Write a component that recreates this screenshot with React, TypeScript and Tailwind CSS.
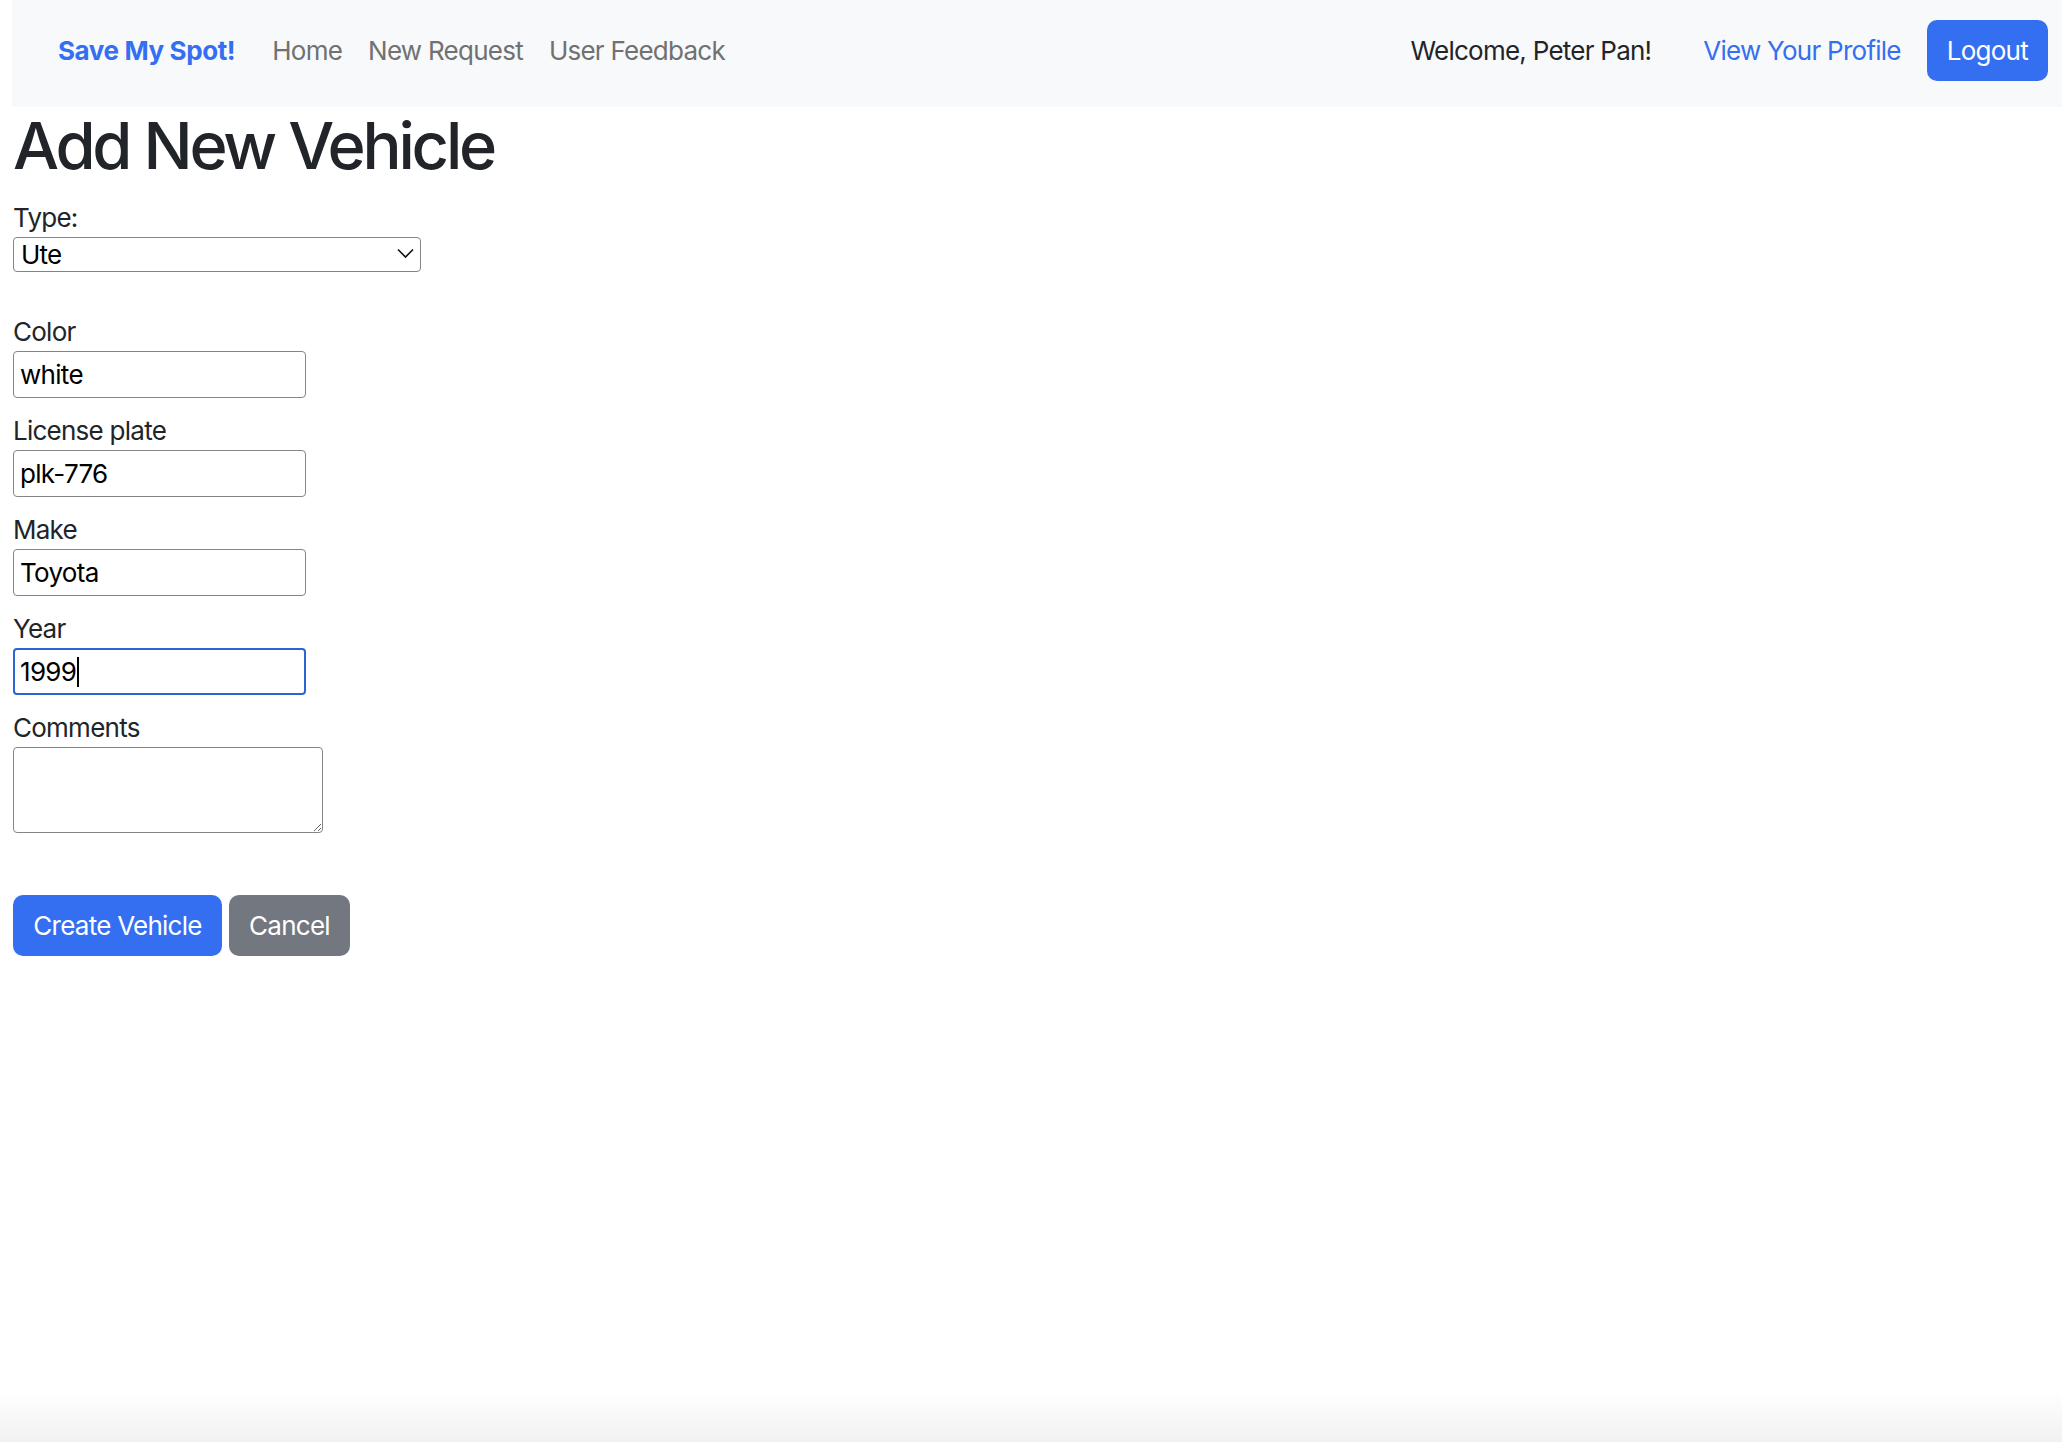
import React, { useState } from 'react';

const field = 'block w-[293px] h-[47px] px-[6px] border border-[#858585] rounded-[4px] bg-white text-[26px] tracking-[-0.7px] text-black outline-none';

function Label({ children }: { children: React.ReactNode }) {
  return <label className="block text-[26px] leading-[39px] text-[#212529]">{children}</label>;
}

export default function App() {
  const [type, setType] = useState('Ute');
  const [form, setForm] = useState({ color: 'white', plate: 'plk-776', make: 'Toyota', comments: '' });

  return (
    <div className="min-h-screen flex flex-col bg-white font-['Inter','Liberation_Sans',sans-serif] tracking-[-0.75px] text-[#212529]">
      <div className="pl-[12px]">
        {/* Navbar */}
        <nav className="h-[107px] pb-[7px] bg-[#f8f9fa] flex items-center pl-[46px] pr-[14px]">
          <a href="#" className="text-[26px] font-bold tracking-[-0.4px] text-[#346ff1] mr-[24px]">Save My Spot!</a>
          <a href="#" className="text-[26px] px-[13px] text-[#707172]">Home</a>
          <a href="#" className="text-[26px] px-[13px] text-[#707172]">New Request</a>
          <a href="#" className="text-[26px] px-[13px] text-[#707172]">User Feedback</a>
          <div className="ml-auto flex items-center">
            <span className="text-[26px] text-[#212529] mr-[52px]">Welcome, Peter Pan!</span>
            <a href="#" className="text-[26px] text-[#346ff1] mr-[26px]">View Your Profile</a>
            <button className="h-[61px] px-[20px] rounded-[10px] bg-[#346ff1] text-white text-[26px]">Logout</button>
          </div>
        </nav>
      </div>

      <div className="pl-[13px]">
        <h1 className="text-[65px] leading-[78px] font-medium mb-[13px] tracking-[-3.2px]">Add New Vehicle</h1>

        <Label>Type:</Label>
        <div className="relative w-[408px] h-[35px]">
          <select
            value={type}
            onChange={(e) => setType(e.target.value)}
            className="appearance-none w-full h-full pl-[7px] border border-[#858585] rounded-[4px] bg-white text-[26px] leading-[33px] text-black outline-none"
          >
            <option>Ute</option>
            <option>Sedan</option>
            <option>Hatchback</option>
            <option>SUV</option>
          </select>
          <svg className="absolute right-[7px] top-[11px] pointer-events-none" width="17" height="11" viewBox="0 0 17 11" fill="none">
            <path d="M1 1.5 L8.5 9 L16 1.5" stroke="#111" strokeWidth="1.6" />
          </svg>
        </div>

        <div className="h-[40px]" />

        <Label>Color</Label>
        <input className={field} value={form.color} onChange={(e) => setForm({ ...form, color: e.target.value })} />
        <div className="h-[13px]" />

        <Label>License plate</Label>
        <input className={field} value={form.plate} onChange={(e) => setForm({ ...form, plate: e.target.value })} />
        <div className="h-[13px]" />

        <Label>Make</Label>
        <input className={field} value={form.make} onChange={(e) => setForm({ ...form, make: e.target.value })} />
        <div className="h-[13px]" />

        <Label>Year</Label>
        {/* focused field, drawn with its caret */}
        <div className="w-[293px] h-[47px] px-[5px] border-2 border-[#2d63d4] rounded-[4px] bg-white flex items-center text-[26px] tracking-[-0.7px] text-black">
          <span>1999</span>
          <span className="ml-[1px] w-[2px] h-[30px] bg-black" />
        </div>
        <div className="h-[13px]" />

        <Label>Comments</Label>
        <textarea
          value={form.comments}
          onChange={(e) => setForm({ ...form, comments: e.target.value })}
          className="block w-[310px] h-[86px] border border-[#858585] rounded-[4px] bg-white text-[26px] outline-none"
        />

        <div className="flex gap-[7px] mt-[62px]">
          <button className="h-[61px] w-[209px] rounded-[10px] bg-[#346ff1] text-white text-[26px]">Create Vehicle</button>
          <button className="h-[61px] w-[121px] rounded-[10px] bg-[#737880] text-white text-[26px]">Cancel</button>
        </div>
      </div>

      <div className="mt-auto h-[50px] bg-gradient-to-b from-white to-[#f1f1f1]" />
    </div>
  );
}
